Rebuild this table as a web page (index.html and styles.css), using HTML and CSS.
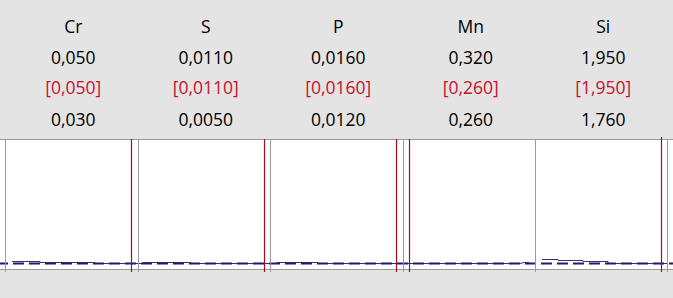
FILE: index.html
```html
<!DOCTYPE html>
<html>
<head>
<meta charset="utf-8">
<link rel="stylesheet" href="styles.css">
</head>
<body>
<div class="page">
  <div class="table">
    <div class="cell head">Cr</div>
    <div class="cell head">S</div>
    <div class="cell head">P</div>
    <div class="cell head">Mn</div>
    <div class="cell head">Si</div>

    <div class="cell">0,050</div>
    <div class="cell">0,0110</div>
    <div class="cell">0,0160</div>
    <div class="cell">0,320</div>
    <div class="cell">1,950</div>

    <div class="cell red">[0,050]</div>
    <div class="cell red">[0,0110]</div>
    <div class="cell red">[0,0160]</div>
    <div class="cell red">[0,260]</div>
    <div class="cell red">[1,950]</div>

    <div class="cell">0,030</div>
    <div class="cell">0,0050</div>
    <div class="cell">0,0120</div>
    <div class="cell">0,260</div>
    <div class="cell">1,760</div>
  </div>

  <div class="chart">
    <svg class="chart-svg" width="673" height="134" viewBox="0 0 673 134">
      <rect x="0" y="0" width="673" height="131" fill="#ffffff"/>
      <line x1="0" y1="0.5" x2="673" y2="0.5" stroke="#9a9a9a" stroke-width="1"/>
      <line x1="0" y1="130.5" x2="673" y2="130.5" stroke="#9a9a9a" stroke-width="1"/>

      <!-- data lines -->
      <g fill="none" stroke="#34346a" stroke-width="1">
        <polyline points="0,124.5 5,124.5"/>
        <polyline points="12,122.5 40,122.5 40,123.5 95,123.5 95,124.5 138,124.5"/>
        <polyline points="139,124.5 143,124.5 143,123.5 191,123.5 191,124.5 270,124.5"/>
        <polyline points="271,124.5 277,124.5 277,123.5 318,123.5 318,124.5 403,124.5"/>
        <polyline points="404,124.5 520,124.5 524,123.5 528,123.5 530,124.5 535,124.5"/>
        <polyline points="542,120.5 558,120.5 558,121.5 583,121.5 583,122.5 608,122.5 608,124.5 667,124.5"/>
      </g>
      <line x1="0" y1="124.5" x2="673" y2="124.5" stroke="#1b1b7c" stroke-width="2" stroke-dasharray="11 5" stroke-dashoffset="-13"/>

      <!-- panel borders -->
      <g stroke="#9a9a9a" stroke-width="1">
        <line x1="5.5" y1="0" x2="5.5" y2="133"/>
        <line x1="138.5" y1="0" x2="138.5" y2="133"/>
        <line x1="270.5" y1="0" x2="270.5" y2="133"/>
        <line x1="403.5" y1="0" x2="403.5" y2="133"/>
        <line x1="535.5" y1="0" x2="535.5" y2="133"/>
        <line x1="667.5" y1="0" x2="667.5" y2="133"/>
      </g>
      <!-- limit markers -->
      <g stroke="#a50d18" stroke-width="1.2">
        <line x1="131.5" y1="0" x2="131.5" y2="133"/>
        <line x1="264.5" y1="0" x2="264.5" y2="133"/>
        <line x1="396.5" y1="0" x2="396.5" y2="133"/>
        <line x1="409.5" y1="0" x2="409.5" y2="133"/>
        <line x1="661.5" y1="-2" x2="661.5" y2="133"/>
      </g>
    </svg>
  </div>
</div>
</body>
</html>
```

FILE: styles.css
```css
html, body {
  margin: 0;
  padding: 0;
  background: #e4e4e4;
}

.page {
  width: 673px;
  height: 298px;
  overflow: hidden;
  background: #e4e4e4;
  font-family: "Open Sans", "Noto Sans", "Liberation Sans", sans-serif;
  font-size: 17.5px;
  color: #000000;
}

.table {
  display: grid;
  grid-template-columns: repeat(5, 132.5px);
  grid-template-rows: 32px 30px 30px 33px;
  padding: 10px 0 0 7px;
  height: 129px;
}

.cell {
  display: flex;
  align-items: center;
  justify-content: center;
  white-space: nowrap;
}

.red {
  color: #c8102e;
}

.chart {
  height: 134px;
  overflow: visible;
}

.chart-svg {
  display: block;
  overflow: visible;
}
```
